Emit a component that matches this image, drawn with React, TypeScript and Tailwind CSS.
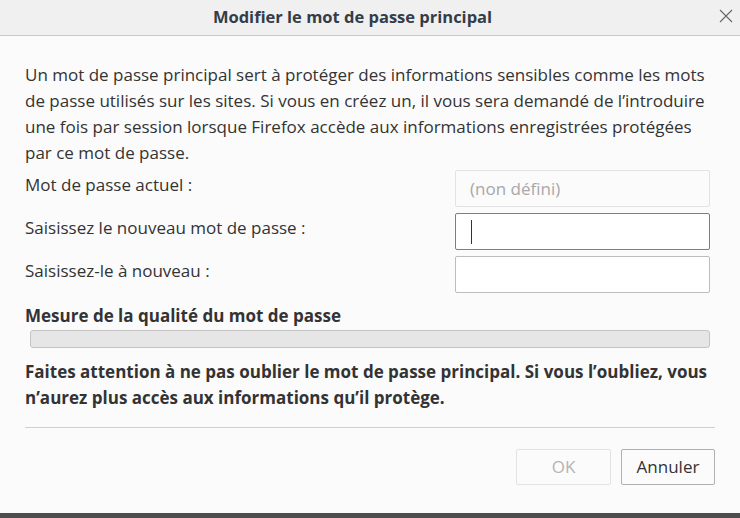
import React from 'react';

const font = { fontFamily: '"Open Sans", "Noto Sans", sans-serif' };

export default function App() {
  return (
    <div className="w-[740px] h-[518px] flex flex-col bg-[#fbfbfb] text-[#333] overflow-hidden" style={font}>
      {/* barre de titre */}
      <div className="h-[36px] shrink-0 flex items-center justify-center pr-[35px] relative bg-[#f0f0f0] border-b border-[#c8c8c8]">
        <span className="text-[16.5px] font-bold text-[#333d48]">Modifier le mot de passe principal</span>
        <svg className="absolute right-[7px] top-[9px]" width="14" height="14" viewBox="0 0 14 14">
          <path d="M1 1 L13 13 M13 1 L1 13" stroke="#666" strokeWidth="1.1" fill="none" />
        </svg>
      </div>

      <div className="flex-1 flex flex-col px-[25px] pt-[26px]">
        <p className="text-[17px] leading-[26px]">
          Un mot de passe principal sert à protéger des informations sensibles comme les mots de passe utilisés sur les sites. Si vous en créez un, il vous sera demandé de l’introduire une fois par session lorsque Firefox accède aux informations enregistrées protégées par ce mot de passe.
        </p>

        <div className="mt-[4px] grid grid-cols-[1fr_255px] gap-y-[6px] mr-[5px] text-[17px]">
          <div className="h-[37px] flex items-center -mt-[4px]">Mot de passe actuel :</div>
          <div className="h-[37px] border border-[#e3e3e3] rounded-[2px] flex items-center px-[14px] text-[#a8a8a8]">(non défini)</div>
          <div className="h-[37px] flex items-center -mt-[4px]">Saisissez le nouveau mot de passe :</div>
          <div className="h-[37px] border border-[#1e9be8] rounded-[2px] bg-white flex items-center px-[15px]">
            <span className="w-[1px] h-[24px] bg-[#333]" />
          </div>
          <div className="h-[37px] flex items-center -mt-[4px]">Saisissez-le à nouveau :</div>
          <div className="h-[37px] border border-[#bdbdbd] rounded-[2px] bg-white" />
        </div>

        <div className="mt-[12px] text-[17px] font-bold leading-[22px]">Mesure de la qualité du mot de passe</div>
        <div className="mt-[3px] ml-[5px] mr-[5px] h-[18px] rounded-[3px] border border-[#c4c4c4] bg-[#e6e6e6]" />

        <p className="mt-[11px] text-[17px] font-bold leading-[26px]">
          Faites attention à ne pas oublier le mot de passe principal. Si vous l’oubliez, vous n’aurez plus accès aux informations qu’il protège.
        </p>

        <div className="mt-[16px] border-t border-[#d0d0d0]" />

        <div className="mt-[21px] flex justify-end gap-[10px]">
          <button className="w-[95px] h-[36px] border border-[#e3e3e3] rounded-[2px] text-[17px] text-[#b4b4b4]">OK</button>
          <button className="w-[94px] h-[36px] border border-[#b0b0b0] rounded-[2px] text-[17px] text-[#333]">Annuler</button>
        </div>
      </div>

      <div className="h-[5px] shrink-0 bg-[#4d4d4d]" />
    </div>
  );
}
